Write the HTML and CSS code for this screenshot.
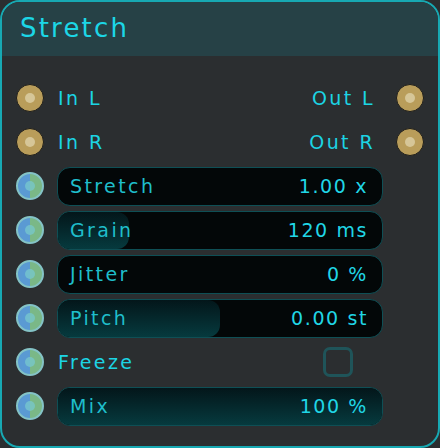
FILE: index.html
```html
<!DOCTYPE html>
<html>
<head>
<meta charset="utf-8">
<link rel="stylesheet" href="styles.css">
</head>
<body>
<div class="panel">
  <div class="header"><span class="title">Stretch</span></div>
  <div class="rows">
    <div class="row">
      <span class="port gold"></span>
      <div class="io"><span class="lbl">In L</span><span class="lbl out">Out L</span></div>
      <span class="port gold"></span>
    </div>
    <div class="row">
      <span class="port gold"></span>
      <div class="io"><span class="lbl">In R</span><span class="lbl out">Out R</span></div>
      <span class="port gold"></span>
    </div>
    <div class="row">
      <span class="port mod"></span>
      <div class="slider"><span class="fill" style="width:0%"></span><span class="sl">Stretch</span><span class="sv">1.00 x</span></div>
    </div>
    <div class="row">
      <span class="port mod"></span>
      <div class="slider"><span class="fill" style="width:22%"></span><span class="sl">Grain</span><span class="sv">120 ms</span></div>
    </div>
    <div class="row">
      <span class="port mod"></span>
      <div class="slider"><span class="fill" style="width:0%"></span><span class="sl">Jitter</span><span class="sv">0 %</span></div>
    </div>
    <div class="row">
      <span class="port mod"></span>
      <div class="slider"><span class="fill" style="width:50%"></span><span class="sl">Pitch</span><span class="sv">0.00 st</span></div>
    </div>
    <div class="row">
      <span class="port mod"></span>
      <div class="io"><span class="lbl">Freeze</span><span class="check"></span></div>
    </div>
    <div class="row">
      <span class="port mod"></span>
      <div class="slider"><span class="fill" style="width:100%"></span><span class="sl">Mix</span><span class="sv">100 %</span></div>
    </div>
  </div>
</div>
</body>
</html>
```
FILE: styles.css
```css
html, body {
  margin: 0;
  padding: 0;
  background: #2b2e30;
}
body {
  width: 440px;
  height: 448px;
  font-family: "DejaVu Sans", "Liberation Sans", sans-serif;
}
.panel {
  box-sizing: border-box;
  width: 440px;
  height: 448px;
  border: 2px solid #17a9b3;
  border-radius: 20px;
  background: #2b2e30;
  overflow: hidden;
}
.header {
  height: 54px;
  background: #264146;
  display: flex;
  align-items: center;
  padding-left: 18px;
}
.title {
  color: #1cd6e6;
  font-size: 26px;
  letter-spacing: 2.2px;
  padding-bottom: 2px;
}
.rows {
  padding: 20px 14px 0 14px;
  display: flex;
  flex-direction: column;
}
.row {
  height: 44px;
  display: grid;
  grid-template-columns: 28px 1fr 28px;
  column-gap: 13px;
  align-items: center;
}
.port {
  box-sizing: border-box;
  width: 28px;
  height: 28px;
  border-radius: 50%;
  position: relative;
}
.port::after {
  content: "";
  position: absolute;
  left: 50%;
  top: 50%;
  width: 10px;
  height: 10px;
  margin: -5px 0 0 -5px;
  border-radius: 50%;
}
.gold {
  background: #b99d5a;
  border: 1.5px solid #1d1d1b;
}
.gold::after {
  background: #d6c698;
}
.mod {
  background: linear-gradient(90deg, #5a9ad3 50%, #7ab887 50%);
  border: 2px solid #84c3c6;
}
.mod::after {
  background: rgba(120, 200, 205, 0.75);
}
.io {
  grid-column: 2;
  display: flex;
  justify-content: space-between;
  align-items: center;
}
.lbl {
  color: #1cd4e4;
  font-size: 19px;
  letter-spacing: 2.4px;
  padding-left: 1px;
}
.lbl.out {
  padding-right: 8px;
}
.check {
  box-sizing: border-box;
  width: 30px;
  height: 30px;
  border: 3px solid #1f5459;
  border-radius: 7px;
  margin-right: 30px;
}
.slider {
  grid-column: 2;
  box-sizing: border-box;
  height: 39px;
  border: 1px solid #0e4f55;
  border-radius: 13px;
  background: #030708;
  position: relative;
  overflow: hidden;
  display: flex;
  justify-content: space-between;
  align-items: center;
  padding: 0 14px 0 12px;
}
.fill {
  position: absolute;
  left: 0;
  top: 0;
  bottom: 0;
  border-radius: 12px;
  background: linear-gradient(180deg, #03161a 0%, #063a3e 100%);
}
.sl, .sv {
  position: relative;
  font-size: 19px;
}
.sl {
  color: #1fbecb;
  letter-spacing: 2.4px;
}
.sv {
  color: #20d6e6;
  letter-spacing: 1.6px;
}
```
